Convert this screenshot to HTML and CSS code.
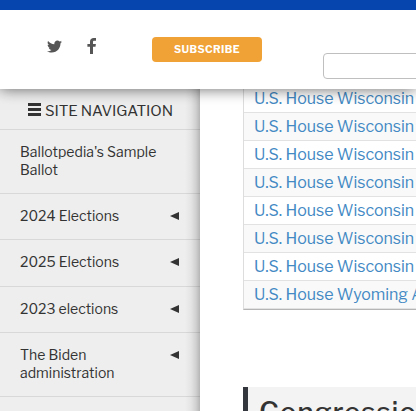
FILE: index.html
```html
<!DOCTYPE html>
<html lang="en">
<head>
<meta charset="utf-8">
<title>Ballotpedia</title>
<link rel="stylesheet" href="styles.css">
</head>
<body>
<header class="top">
  <div class="social">
    <svg class="twitter" viewBox="0 0 512 416"><path fill="currentColor" d="M459.400 103.700c.300 4.500.300 9.100.300 13.600 0 138.700-105.600 298.600-298.600 298.600-59.500 0-114.700-17.200-161.100-47.100 8.400 1 16.600 1.300 25.300 1.300 49.100 0 94.200-16.600 130.300-44.800-46.100-1-84.800-31.200-98.100-72.800 6.500 1 13 1.600 19.800 1.600 9.400 0 18.800-1.300 27.600-3.600-48.100-9.700-84.100-52-84.100-103v-1.300c14 7.800 30.200 12.700 47.400 13.300-28.300-18.800-46.800-51-46.800-87.400 0-19.500 5.200-37.400 14.300-53 51.700 63.700 129.300 105.300 216.400 109.800-1.600-7.800-2.600-15.900-2.600-24C249.500 47.100 296.300 0 354.500 0c30.200 0 57.500 12.700 76.700 33.100 23.700-4.500 46.500-13.300 66.600-25.300-7.800 24.400-24.400 44.800-46.100 57.800 21.100-2.300 41.600-8.100 60.400-16.200-14.300 20.800-32.200 39.300-52.600 54.300z"/></svg>
    <svg class="facebook" viewBox="0 0 9 16"><path fill="currentColor" d="M9 .1v2.600H7.500C6.300 2.700 6 3.200 6 4v1.900h2.900l-.4 2.800H6V16H3V8.700H.4V5.900H3V3.700C3 1.300 4.500 0 6.700 0 7.800 0 8.700.1 9 .1z"/></svg>
  </div>
  <a class="subscribe">SUBSCRIBE</a>
  <input class="search" type="text" aria-label="Search">
</header>
<div class="page">
  <nav class="sidebar">
    <div class="nav-title"><span class="bars"><i></i><i></i><i></i></span><span>SITE NAVIGATION</span></div>
    <div class="item"><span>Ballotpedia's Sample<br>Ballot</span></div>
    <div class="item"><span>2024 Elections</span><b class="arrow"></b></div>
    <div class="item tall"><span>2025 Elections</span><b class="arrow"></b></div>
    <div class="item"><span>2023 elections</span><b class="arrow"></b></div>
    <div class="item"><span>The Biden<br>administration</span><b class="arrow"></b></div>
  </nav>
  <main class="content">
    <div class="table">
      <a class="row">U.S. House Wisconsin</a>
      <a class="row">U.S. House Wisconsin</a>
      <a class="row">U.S. House Wisconsin</a>
      <a class="row">U.S. House Wisconsin</a>
      <a class="row">U.S. House Wisconsin</a>
      <a class="row">U.S. House Wisconsin</a>
      <a class="row">U.S. House Wisconsin</a>
      <a class="row">U.S. House Wyoming A</a>
    </div>
    <h2 class="heading">Congressio</h2>
  </main>
</div>
</body>
</html>
```
FILE: styles.css
```css
* { box-sizing: border-box; }
body {
  margin: 0;
  width: 416px;
  height: 411px;
  overflow: hidden;
  display: flex;
  flex-direction: column;
  background: #fff;
  color: #333;
  font-family: "Libre Franklin", Inter, sans-serif;
}
.top {
  position: relative;
  z-index: 2;
  flex: none;
  height: 89px;
  padding-left: 47px;
  border-top: 10px solid #0645ad;
  background: #fff;
  box-shadow: 0 0 14px rgba(0, 0, 0, .6);
  display: flex;
  align-items: flex-start;
}
.social {
  width: 105px;
  padding-top: 28px;
  display: flex;
  gap: 25px;
  color: #555;
  flex: none;
}
.twitter { width: 15px; height: 13px; margin-top: 2px; }
.facebook { width: 9px; height: 16px; }
.subscribe {
  flex: none;
  width: 110px;
  height: 25px;
  margin-top: 27px;
  border-radius: 4px;
  background: #f0a236;
  color: #fff;
  font-size: 10.5px;
  font-weight: 700;
  line-height: 25px;
  letter-spacing: .4px;
  text-align: center;
}
.search {
  flex: 1;
  min-width: 0;
  height: 26px;
  margin: 43px -10px 0 61px;
  border: 1px solid #bfbfbf;
  border-radius: 4px;
  background: #fff;
}
.page { flex: 1; min-height: 0; display: flex; overflow: hidden; }
.sidebar {
  flex: none;
  width: 200px;
  background: linear-gradient(to left, #b5b5b5 0, #d0d0d0 4px, #e4e4e4 9px, #eee 15px);
}
.nav-title {
  height: 41px;
  padding: 3px 0 0 28px;
  border-bottom: 1px solid rgba(0, 0, 0, .09);
  display: flex;
  align-items: center;
  gap: 4px;
  font-size: 15px;
  letter-spacing: -.1px;
  white-space: nowrap;
}
.bars { width: 13px; display: grid; gap: 2px; margin-top: -3px; }
.bars i { height: 3px; background: #333; }
.item {
  min-height: 46px;
  padding: 13px 20px 14px;
  border-bottom: 1px solid rgba(0, 0, 0, .09);
  display: flex;
  justify-content: space-between;
  font-size: 14px;
  line-height: 18px;
  letter-spacing: .03px;
  white-space: nowrap;
}
.item.tall { min-height: 47px; }
.arrow {
  width: 9px;
  height: 8px;
  margin: 5px 1px 0 0;
  background: #333;
  clip-path: polygon(0 50%, 100% 0, 100% 100%);
}
.content { flex: 1; min-width: 0; padding-left: 43px; overflow: hidden; }
.table {
  margin-top: -4px;
  border-left: 1px solid #ddd;
  border-bottom: 1px solid #b5b5b5;
}
.row {
  display: block;
  height: 27.94px;
  padding-left: 10px;
  border-bottom: 1px solid #e2e2e2;
  color: #4389c4;
  font-size: 16px;
  font-weight: 400;
  line-height: 27px;
  letter-spacing: -.04px;
  white-space: nowrap;
}
.row:nth-child(even) { background: #f9f9f9; }
.heading {
  height: 60px;
  margin: 77.5px 0 0;
  padding: 9px 0 0 11px;
  border-left: 5px solid #33363d;
  background: #f3f3f3;
  font-size: 28px;
  font-weight: 500;
  line-height: 32px;
  letter-spacing: .8px;
  white-space: nowrap;
}
```
